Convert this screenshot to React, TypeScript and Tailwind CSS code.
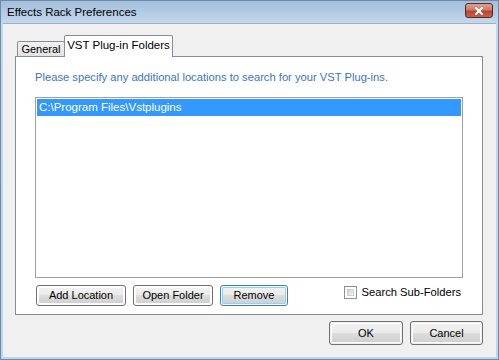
import { X } from "lucide-react";

const font = { fontFamily: '"Liberation Sans", Arial, sans-serif' };

function VistaButton({
  label,
  width,
  height = 21,
  focused = false,
}: {
  label: string;
  width: string;
  height?: number;
  focused?: boolean;
}) {
  return (
    <div
      className={`${width} ${
        height === 24 ? "h-[24px]" : "h-[21px]"
      } rounded-[3px] border ${
        focused ? "border-[#3c7fb1]" : "border-[#707070]"
      } p-px`}
    >
      <div
        className={`h-full w-full rounded-[2px] flex items-center justify-center text-[11px] text-black bg-[linear-gradient(to_bottom,#f2f2f2_0%,#ebebeb_50%,#dddddd_50%,#cfcfcf_100%)] ${
          focused
            ? "shadow-[inset_0_0_0_1px_#8fd3f4]"
            : "shadow-[inset_0_0_0_1px_#fcfcfc]"
        }`}
      >
        {label}
      </div>
    </div>
  );
}

export default function App() {
  return (
    <div
      className="w-[499px] h-[360px] overflow-hidden bg-[#6f8aa6] p-px"
      style={font}
    >
      <div className="h-full w-full flex flex-col bg-[linear-gradient(to_bottom,#a3bedb_0px,#c2d8ed_22px,#bdd6ee_100%)] px-[2px] pb-[2px]">
        {/* Title bar */}
        <div className="h-[22px] flex items-center pl-[4px] pr-[3px] shrink-0">
          <span className="text-[11.5px] text-black flex-1 pt-[1px]">
            Effects Rack Preferences
          </span>
          <div className="w-[28px] h-[15px] -mt-[3px] rounded-[3px] border border-[#5a2a22] bg-[linear-gradient(to_bottom,#e0a090_0%,#cf7a66_45%,#b8452f_55%,#c7624c_100%)] flex items-center justify-center">
            <X className="w-[12px] h-[12px] text-white" strokeWidth={4} />
          </div>
        </div>

        {/* Client area */}
        <div className="flex-1 bg-[#f0f0f0] border-t border-[#9bb0c6] flex flex-col pl-[12px] pr-[13px] pt-[11px]">
          {/* Tabs */}
          <div className="flex items-end h-[21px] pl-[2px]">
            <div className="h-[15px] w-[48px] border border-b-0 border-[#898c95] rounded-t-[2px] bg-[linear-gradient(to_bottom,#f2f2f2,#e3e3e3)] flex items-center justify-center text-[11px] text-black">
              General
            </div>
            <div className="relative z-10 h-[22px] -mb-px w-[109px] border border-b-0 border-[#898c95] -ml-px bg-white rounded-t-[2px] flex items-center justify-center text-[11.5px] text-black pb-[2px]">
              VST Plug-in Folders
            </div>
          </div>

          {/* Tab panel */}
          <div className="h-[259px] border border-[#898c95] bg-white flex flex-col pl-[19px] pr-[19px]">
            <div className="h-[40px] flex items-center text-[11.2px] text-[#3d74bd] pt-[1px]">
              Please specify any additional locations to search for your VST Plug-ins.
            </div>
            <div className="h-[181px] border border-[#a0a0a0] bg-white p-px">
              <div className="h-[17px] bg-[#3399ff] text-white text-[11.5px] flex items-center pl-[2px]">
                C:\Program Files\Vstplugins
              </div>
            </div>
            <div className="flex items-center mt-[7px] pl-px">
              <VistaButton label="Add Location" width="w-[90px]" />
              <div className="w-[7px]" />
              <VistaButton label="Open Folder" width="w-[80px]" />
              <div className="w-[7px]" />
              <VistaButton label="Remove" width="w-[68px]" focused />
              <div className="flex-1" />
              <div className="flex items-center gap-[5px] pr-[2px] -mt-[6px]">
                <div className="w-[13px] h-[13px] border border-[#8e8f8f] bg-white p-[2px]">
                  <div className="h-full w-full border border-[#d0d0d0] bg-[linear-gradient(135deg,#cbcfd5,#f6f6f6)]" />
                </div>
                <span className="text-[11.2px] text-black">Search Sub-Folders</span>
              </div>
            </div>
          </div>

          {/* Dialog buttons */}
          <div className="flex justify-end gap-[7px] mt-[6px]">
            <VistaButton label="OK" width="w-[74px]" height={24} />
            <VistaButton label="Cancel" width="w-[73px]" height={24} />
          </div>
        </div>
      </div>
    </div>
  );
}
